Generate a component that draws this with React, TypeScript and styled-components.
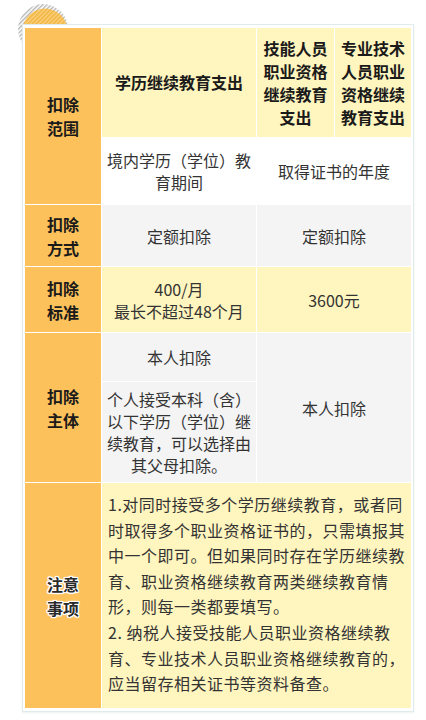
import styled, { createGlobalStyle } from 'styled-components';

const GlobalStyle = createGlobalStyle`
  * { box-sizing: border-box; }
  body {
    margin: 0;
    background: #ffffff;
    font-family: "Noto Sans CJK SC", "Noto Sans", sans-serif;
    color: #333333;
  }
`;

const colors = {
  orange: '#fdc15b',
  yellow: '#fff5be',
  gray: '#f4f4f4',
  white: '#ffffff',
};

const Page = styled.div`
  position: relative;
  width: 426px;
  height: 720px;
  padding: 24px 0 0 22px;
`;

const Decor = styled.svg`
  position: absolute;
  left: 17px;
  top: 4px;
`;

const Frame = styled.div`
  position: relative;
  width: 392px;
  border: 1px solid #dfeceb;
  background: #ffffff;
  padding: 3px 1px 3px 2px;
  box-shadow: 0 1px 2px rgba(180, 200, 200, 0.25);
`;

const Table = styled.div`
  display: grid;
  grid-template-columns: 76px 154px 77px 76px;
  grid-template-rows: 109px 66px 61px 65px 48px 100px 225px;
  gap: 1px;
  background: #ffffff;
`;

const Cell = styled.div<{ $bg: string; $area: string; $left?: boolean }>`
  grid-area: ${({ $area }) => $area};
  background: ${({ $bg }) => $bg};
  display: flex;
  align-items: center;
  justify-content: center;
  text-align: ${({ $left }) => ($left ? 'left' : 'center')};
  padding: 0 5px;
  font-size: 16px;
  line-height: 22px;
  color: #333333;
`;

const Label = styled(Cell)`
  font-weight: 700;
  line-height: 24px;
  color: #1a1a1a;
  padding: 0 20px;
`;

const Head = styled(Cell)`
  font-weight: 700;
  line-height: 23px;
  color: #1a1a1a;
`;

// the last label carries a white halo round its letters
const GlowLabel = styled(Label)`
  color: #2a2a2a;
  text-shadow:
    0 0 2px #fff, 0 0 2px #fff, 0 0 3px #fff,
    1px 0 0 #fff, -1px 0 0 #fff, 0 1px 0 #fff, 0 -1px 0 #fff,
    1px 1px 0 #fff, -1px -1px 0 #fff, 1px -1px 0 #fff, -1px 1px 0 #fff;
`;

const Notes = styled(Cell)`
  align-items: flex-start;
  padding: 9px 5px 0 6px;
  line-height: 25.6px;
  letter-spacing: 0.5px;
  color: #333333;
`;

export default function App() {
  return (
    <>
      <GlobalStyle />
      <Page>
        <Decor width="60" height="60" viewBox="0 0 60 60">
          <defs>
            <pattern id="hatchGray" width="3" height="3" patternUnits="userSpaceOnUse" patternTransform="rotate(45)">
              <rect width="1.4" height="3" fill="#b5b5b5" />
            </pattern>
            <pattern id="hatchOrange" width="3" height="3" patternUnits="userSpaceOnUse" patternTransform="rotate(45)">
              <rect width="3" height="3" fill="#fcd27c" />
              <rect width="1.6" height="3" fill="#f2b443" />
            </pattern>
          </defs>
          <circle cx="26" cy="25" r="25" fill="url(#hatchGray)" />
          <circle cx="28" cy="27" r="22.5" fill="url(#hatchOrange)" />
        </Decor>
        <Frame>
          <Table>
            <Label $bg={colors.orange} $area="1 / 1 / 3 / 2">扣除范围</Label>
            <Head $bg={colors.yellow} $area="1 / 2 / 2 / 3">学历继续教育支出</Head>
            <Head $bg={colors.yellow} $area="1 / 3 / 2 / 4">技能人员职业资格继续教育支出</Head>
            <Head $bg={colors.yellow} $area="1 / 4 / 2 / 5">专业技术人员职业资格继续教育支出</Head>

            <Cell $bg={colors.white} $area="2 / 2 / 3 / 3">境内学历（学位）教育期间</Cell>
            <Cell $bg={colors.white} $area="2 / 3 / 3 / 5">取得证书的年度</Cell>

            <Label $bg={colors.orange} $area="3 / 1 / 4 / 2">扣除方式</Label>
            <Cell $bg={colors.gray} $area="3 / 2 / 4 / 3">定额扣除</Cell>
            <Cell $bg={colors.gray} $area="3 / 3 / 4 / 5">定额扣除</Cell>

            <Label $bg={colors.orange} $area="4 / 1 / 5 / 2">扣除标准</Label>
            <Cell $bg={colors.yellow} $area="4 / 2 / 5 / 3">
              400/月
              <br />
              最长不超过48个月
            </Cell>
            <Cell $bg={colors.yellow} $area="4 / 3 / 5 / 5">3600元</Cell>

            <Label $bg={colors.orange} $area="5 / 1 / 7 / 2">扣除主体</Label>
            <Cell $bg={colors.gray} $area="5 / 2 / 6 / 3">本人扣除</Cell>
            <Cell $bg={colors.gray} $area="6 / 2 / 7 / 3">
              个人接受本科（含）以下学历（学位）继续教育，可以选择由其父母扣除。
            </Cell>
            <Cell $bg={colors.gray} $area="5 / 3 / 7 / 5">本人扣除</Cell>

            <GlowLabel $bg={colors.orange} $area="7 / 1 / 8 / 2">注意事项</GlowLabel>
            <Notes $bg={colors.yellow} $area="7 / 2 / 8 / 5" $left>
              <div>
                1.对同时接受多个学历继续教育，或者同时取得多个职业资格证书的，只需填报其中一个即可。但如果同时存在学历继续教育、职业资格继续教育两类继续教育情形，则每一类都要填写。
                <br />
                2. 纳税人接受技能人员职业资格继续教育、专业技术人员职业资格继续教育的，应当留存相关证书等资料备查。
              </div>
            </Notes>
          </Table>
        </Frame>
      </Page>
    </>
  );
}
